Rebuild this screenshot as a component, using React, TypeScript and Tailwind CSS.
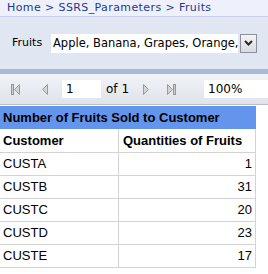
import React from "react";

const rows = [
  { name: "CUSTA", qty: 1 },
  { name: "CUSTB", qty: 31 },
  { name: "CUSTC", qty: 20 },
  { name: "CUSTD", qty: 23 },
  { name: "CUSTE", qty: 17 },
];

const First = () => (
  <svg width="9" height="11" viewBox="0 0 9 11">
    <rect x="0.5" y="0.5" width="2" height="10" fill="#c8c8c8" stroke="#9a9a9a" />
    <path d="M8.5 0.5 L3.5 5.5 L8.5 10.5 Z" fill="#d4d4d4" stroke="#9a9a9a" />
  </svg>
);

const Prev = () => (
  <svg width="6" height="11" viewBox="0 0 6 11">
    <path d="M5.5 0.5 L0.5 5.5 L5.5 10.5 Z" fill="#d4d4d4" stroke="#9a9a9a" />
  </svg>
);

const Next = () => (
  <svg width="6" height="11" viewBox="0 0 6 11">
    <path d="M0.5 0.5 L5.5 5.5 L0.5 10.5 Z" fill="#d4d4d4" stroke="#9a9a9a" />
  </svg>
);

const Last = () => (
  <svg width="9" height="11" viewBox="0 0 9 11">
    <path d="M0.5 0.5 L5.5 5.5 L0.5 10.5 Z" fill="#d4d4d4" stroke="#9a9a9a" />
    <rect x="6.5" y="0.5" width="2" height="10" fill="#c8c8c8" stroke="#9a9a9a" />
  </svg>
);

export default function App() {
  return (
    <div className="w-[268px] h-[274px] overflow-hidden bg-white">
      {/* breadcrumb */}
      <div
        className="h-[17px] bg-[#eef1fb] border-b border-[#c9d1ea] pl-[7px] text-[11px] leading-[16px] tracking-[0.4px] text-[#1c3a8a] whitespace-nowrap"
        style={{ fontFamily: '"DejaVu Sans", Verdana, sans-serif' }}
      >
        Home &gt; SSRS_Parameters &gt; Fruits
      </div>

      {/* parameters */}
      <div
        className="h-[52px] bg-[#e0e6f2] flex items-center pl-[12px]"
        style={{ fontFamily: '"DejaVu Sans", Verdana, sans-serif' }}
      >
        <span className="text-[11px] text-black w-[39px] shrink-0">Fruits</span>
        <div className="w-[187px] h-[19px] shrink-0 bg-white text-[11.5px] leading-[19px] pl-[2px] overflow-hidden whitespace-nowrap">
          Apple, Banana, Grapes, Orange,
        </div>
        <div className="ml-[2px] w-[17px] h-[19px] shrink-0 border border-[#8a8f99] bg-gradient-to-b from-[#f4f4f4] to-[#d8dbe0] flex items-center justify-center">
          <svg width="9" height="6" viewBox="0 0 9 6">
            <path d="M1 1 L4.5 4.5 L8 1" fill="none" stroke="#2a2a2a" strokeWidth="2" />
          </svg>
        </div>
      </div>
      <div className="h-[5px] bg-[#a8b8d9]" />

      {/* toolbar */}
      <div
        className="h-[31px] bg-gradient-to-b from-[#f1f3f7] to-[#dfe3ea] border-b border-[#b9bfca] flex items-center whitespace-nowrap"
        style={{ fontFamily: '"DejaVu Sans", Verdana, sans-serif' }}
      >
        <div className="ml-[11px] shrink-0"><First /></div>
        <div className="ml-[22px] shrink-0"><Prev /></div>
        <div className="ml-[14px] w-[39px] h-[18px] shrink-0 bg-white text-[12px] leading-[18px] pl-[4px]">1</div>
        <span className="ml-[5px] shrink-0 text-[12px] text-black">of 1</span>
        <div className="ml-[14px] shrink-0"><Next /></div>
        <div className="ml-[18px] shrink-0"><Last /></div>
        <div className="ml-[28px] w-[70px] h-[18px] bg-white text-[12px] leading-[18px] pl-[4px] shrink-0">100%</div>
      </div>

      {/* table */}
      <div className="mt-[1px] w-[256px]" style={{ fontFamily: '"Liberation Sans", Arial, sans-serif' }}>
        <div className="h-[23px] bg-[#6495ed] font-bold text-[13px] leading-[23px] pl-[3px] text-black">
          Number of Fruits Sold to Customer
        </div>
        <div className="grid grid-cols-[119px_137px] text-[13px] text-black">
          <div className="h-[24px] border-r border-b border-[#d3d3d3] font-bold leading-[23px] pl-[3px]">Customer</div>
          <div className="h-[24px] border-r border-b border-[#d3d3d3] font-bold leading-[23px] pl-[4px]">Quantities of Fruits</div>
          {rows.map((r) => (
            <React.Fragment key={r.name}>
              <div className="h-[23px] border-r border-b border-[#d3d3d3] leading-[22px] pl-[3px]">{r.name}</div>
              <div className="h-[23px] border-r border-b border-[#d3d3d3] leading-[22px] pr-[3px] text-right">{r.qty}</div>
            </React.Fragment>
          ))}
        </div>
      </div>
    </div>
  );
}
